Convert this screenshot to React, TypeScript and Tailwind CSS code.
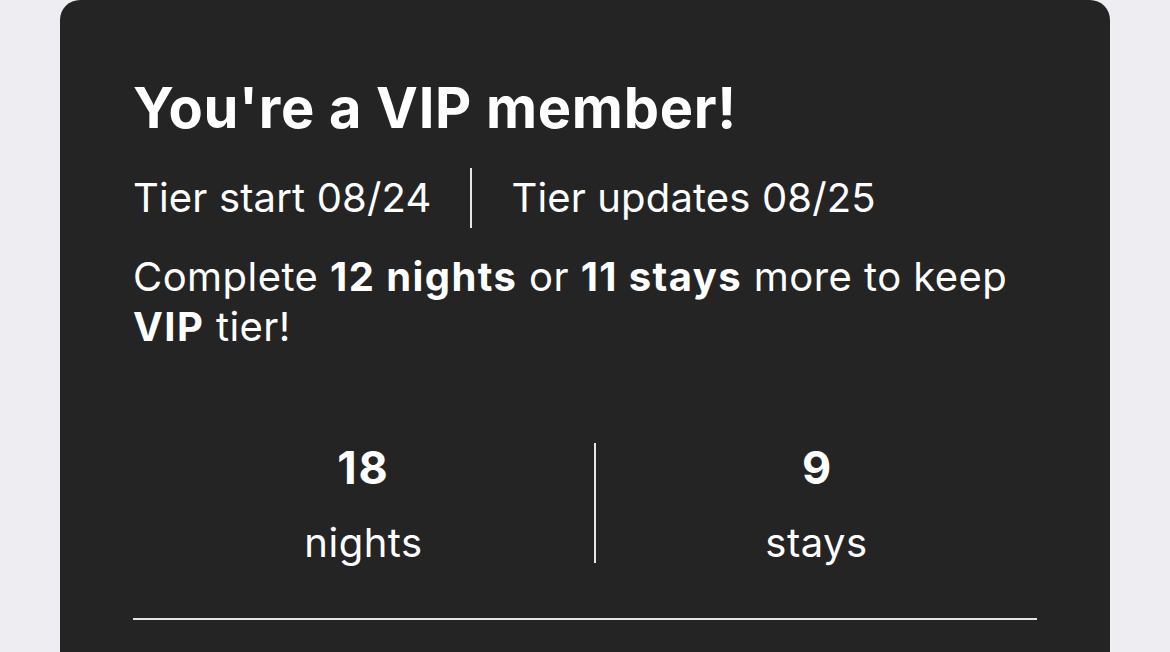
export default function App() {
  return (
    <div className="min-h-[652px] h-[652px] overflow-hidden bg-[#eeedf2] pl-[60px] font-['Inter',sans-serif]">
      <div className="w-[1050px] h-[700px] rounded-[20px] bg-[#242424] px-[73px] pt-[74px] text-white">
        <h1 className="text-[56px] leading-[68px] font-bold tracking-[0.7px]">You're a VIP member!</h1>

        <div className="mt-[26px] flex items-center h-[60px] text-[40px] leading-[60px] tracking-[0.15px]">
          <span>Tier start 08/24</span>
          <div className="mx-[39px] w-[2px] h-[60px] bg-[#e6e6e6]" />
          <span>Tier updates 08/25</span>
        </div>

        <p className="mt-[24px] text-[40px] leading-[50px] tracking-[0.45px]">
          Complete <b className="font-bold tracking-[1.4px]">12 nights</b> or{" "}
          <b className="font-bold tracking-[1.4px]">11 stays</b> more to keep{" "}
          <b className="font-bold tracking-[1.4px]">VIP</b> tier!
        </p>

        <div className="mt-[91px] flex items-start">
          <div className="w-[461px] flex flex-col items-center">
            <span className="text-[45px] leading-[50px] font-bold tracking-[2px]">18</span>
            <span className="mt-[20px] text-[40px] leading-[60px] tracking-[0.5px]">nights</span>
          </div>
          <div className="w-[2px] h-[120px] bg-[#e6e6e6]" />
          <div className="flex-1 flex flex-col items-center">
            <span className="text-[45px] leading-[50px] font-bold">9</span>
            <span className="mt-[20px] text-[40px] leading-[60px] tracking-[0.5px]">stays</span>
          </div>
        </div>

        <div className="mt-[45px] h-[2px] bg-[#e6e6e6]" />
      </div>
    </div>
  );
}
